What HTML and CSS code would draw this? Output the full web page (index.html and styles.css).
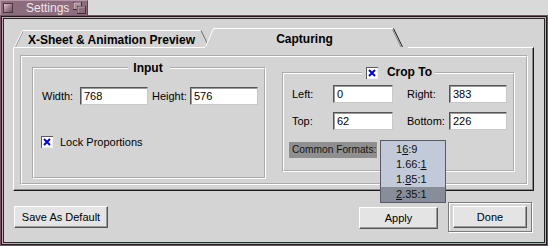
FILE: index.html
```html
<!DOCTYPE html>
<html>
<head>
<meta charset="utf-8">
<link rel="stylesheet" href="styles.css">
</head>
<body>
<div class="titlebar">
  <span class="closebox"></span>
  <span class="title">Settings</span>
  <svg class="zoombox" width="13" height="12" viewBox="0 0 13 12">
    <rect x="0.5" y="0.5" width="8" height="7" fill="#a98c9b" stroke="#3c2c35"/>
    <rect x="4.5" y="4.5" width="8" height="7" fill="#8d6d7d" stroke="#3c2c35"/>
    <path d="M1 1h7M1 1v6" stroke="#d9c3cf"/>
    <path d="M5 5h7M5 5v6" stroke="#c2a8b6"/>
  </svg>
</div>
<div class="window">
  <div class="tabs">
    <div class="tab tab-back">
      <svg class="tab-shape" width="195" height="17" viewBox="0 0 195 17">
        <polygon points="0,17 8,0.5 187,0.5 195,17" fill="#d4d4d4"/>
        <path d="M0.5 17 L8.5 0.5 L187 0.5" fill="none" stroke="#ffffff"/>
        <path d="M1.5 17 L9 1.5" fill="none" stroke="#a0a0a0"/>
        <path d="M187 0.5 L195 17" fill="none" stroke="#707070"/>
      </svg>
      <span class="tab-label">X-Sheet &amp; Animation Preview</span>
    </div>
    <div class="tab tab-front">
      <svg class="tab-shape" width="199" height="19" viewBox="0 0 199 19">
        <polygon points="0,19 8,0.5 189,0.5 198,19" fill="#d4d4d4"/>
        <path d="M0.5 19 L8.5 0.5 L188 0.5" fill="none" stroke="#ffffff"/>
        <path d="M188.5 0.5 L197.5 19" fill="none" stroke="#1a1a1a"/>
        <path d="M187.5 1.5 L196 19" fill="none" stroke="#8a8a8a"/>
      </svg>
      <span class="tab-label">Capturing</span>
    </div>
  </div>
  <div class="panel">
    <div class="frame">
      <fieldset class="group group-input">
        <legend class="legend">Input</legend>
        <div class="size-grid">
          <span class="lbl">Width:</span><span class="field">768</span>
          <span class="lbl lbl-gap">Height:</span><span class="field">576</span>
        </div>
        <div class="check-row">
          <svg class="check" width="12" height="12" viewBox="0 0 12 12">
            <rect x="0" y="0" width="12" height="12" fill="#5a5a5a"/>
            <rect x="1" y="1" width="11" height="11" fill="#f2f2f2"/>
            <rect x="1" y="1" width="10" height="10" fill="#ffffff"/>
            <path d="M3 3 L9 9 M9 3 L3 9" stroke="#0000e6" stroke-width="2"/>
          </svg>
          <span class="lbl">Lock Proportions</span>
        </div>
      </fieldset>
      <fieldset class="group group-crop">
        <legend class="legend legend-check">
          <svg class="check" width="12" height="12" viewBox="0 0 12 12">
            <rect x="0" y="0" width="12" height="12" fill="#5a5a5a"/>
            <rect x="1" y="1" width="11" height="11" fill="#f2f2f2"/>
            <rect x="1" y="1" width="10" height="10" fill="#ffffff"/>
            <path d="M3 3 L9 9 M9 3 L3 9" stroke="#0000e6" stroke-width="2"/>
          </svg>
          <span>Crop To</span>
        </legend>
        <div class="crop-grid">
          <span class="lbl">Left:</span><span class="field">0</span>
          <span class="lbl lbl-gap2">Right:</span><span class="field">383</span>
          <span class="lbl">Top:</span><span class="field">62</span>
          <span class="lbl lbl-gap2">Bottom:</span><span class="field">226</span>
        </div>
        <div class="formats">
          <span class="formats-label">Common Formats:</span>
          <div class="menu">
            <div class="menu-item">1<u>6</u>:9</div>
            <div class="menu-item">1.66:<u>1</u></div>
            <div class="menu-item">1.<u>8</u>5:1</div>
            <div class="menu-item menu-item-hot"><u>2</u>.35:1</div>
          </div>
        </div>
      </fieldset>
    </div>
  </div>
  <div class="buttons">
    <span class="btn btn-save">Save As Default</span>
    <span class="btn btn-apply">Apply</span>
    <span class="default-ring"><span class="btn btn-done">Done</span></span>
  </div>
</div>
</body>
</html>
```

FILE: styles.css
```css
html, body {
  margin: 0;
  padding: 0;
}
body {
  width: 548px;
  height: 246px;
  overflow: hidden;
  background: #d9d9d9;
  font-family: "Liberation Sans", Arial, sans-serif;
  font-size: 11px;
  color: #000;
}
.titlebar {
  width: 88px;
  height: 15px;
  box-sizing: border-box;
  background: #8d6d7d;
  border-top: 1px solid #b797a7;
  border-left: 1px solid #b797a7;
  border-right: 1px solid #5b4350;
  display: flex;
  align-items: center;
  padding-left: 2px;
}
.closebox {
  width: 10px;
  height: 10px;
  box-sizing: border-box;
  border: 1px solid #4a3640;
  background: linear-gradient(135deg, #e0c4d2 0%, #a3808f 50%, #6e5260 100%);
}
.title {
  margin-left: 13px;
  color: #f0e6eb;
  font-size: 12px;
  line-height: 14px;
}
.zoombox {
  margin-left: auto;
  margin-right: 1px;
}
.window {
  height: 231px;
  box-sizing: border-box;
  padding: 4px;
  background: #d4d4d4;
  box-shadow: inset 0 0 0 1px #6e5563, inset 0 0 0 2px #1d1b1c, inset 0 0 0 3px #c7a3b5, inset 0 0 0 4px #2a2a2a;
}
.tabs {
  display: flex;
  align-items: flex-end;
  margin: 9px 0 0 10px;
  height: 19px;
}
.tab {
  position: relative;
  display: flex;
  align-items: center;
  justify-content: center;
  font-size: 12px;
  font-weight: bold;
}
.tab-shape {
  position: absolute;
  left: 0;
  top: 0;
}
.tab-label {
  position: relative;
  line-height: 14px;
}
.tab-back {
  width: 195px;
  height: 17px;
}
.tab-back .tab-label {
  top: 1px;
}
.tab-front {
  width: 199px;
  height: 19px;
  margin-left: -4px;
}
.tab-front .tab-label {
  top: 1px;
}
.panel {
  margin-left: 9px;
  width: 521px;
  height: 144px;
  box-sizing: border-box;
  border-left: 1px solid #ffffff;
  border-top: 1px solid #d4d4d4;
  border-right: 1px solid #1a1a1a;
  border-bottom: 1px solid #1a1a1a;
  box-shadow: inset -1px -1px 0 #8a8a8a, inset 1px 0 0 #d4d4d4;
  padding: 7px 5px 5px 6px;
  position: relative;
}
.panel::before {
  content: "";
  position: absolute;
  left: 394px;
  right: 0;
  top: -1px;
  border-top: 1px solid #ffffff;
}
.panel::after {
  content: "";
  position: absolute;
  left: 0;
  width: 191px;
  top: -1px;
  border-top: 1px solid #ffffff;
}
.frame {
  height: 130px;
  box-sizing: border-box;
  border: 2px groove #ffffff;
  display: flex;
  align-items: flex-start;
  padding: 4px 0 0 10px;
}
.group {
  margin: 0;
  border: 2px groove #ffffff;
  box-sizing: border-box;
  min-width: 0;
}
.legend {
  margin: 0 auto;
  padding: 0 7px 0 5px;
  font-size: 12px;
  font-weight: bold;
  line-height: 14px;
}
.legend-check {
  display: flex;
  align-items: center;
  gap: 9px;
  padding: 0 3px 0 4px;
  line-height: 13px;
}
.group-input {
  width: 234px;
  height: 118px;
  padding: 12px 0 0 0;
}
.group-crop {
  width: 233px;
  height: 106px;
  margin-top: 5px;
  margin-left: 16px;
  padding: 6px 0 0 0;
}
.size-grid {
  display: grid;
  grid-template-columns: 38px 68px 42px 68px;
  align-items: center;
  margin-left: 8px;
}
.crop-grid {
  display: grid;
  grid-template-columns: 41px 60px 56px 58px;
  grid-auto-rows: 18px;
  row-gap: 9px;
  align-items: center;
  margin-left: 8px;
}
.lbl {
  white-space: nowrap;
}
.lbl-gap {
  padding-left: 4px;
}
.lbl-gap2 {
  padding-left: 14px;
}
.field {
  height: 18px;
  box-sizing: border-box;
  background: #ffffff;
  border-top: 1px solid #555;
  border-left: 1px solid #555;
  border-right: 1px solid #c8c8c8;
  border-bottom: 1px solid #c8c8c8;
  box-shadow: inset 1px 1px 0 #9a9a9a;
  padding-left: 3px;
  line-height: 16px;
}
.check-row {
  display: flex;
  align-items: center;
  gap: 7px;
  margin: 31px 0 0 7px;
}
.check {
  display: block;
  flex: none;
}
.formats {
  position: relative;
  margin: 12px 0 0 5px;
  height: 16px;
}
.formats-label {
  display: block;
  width: 88px;
  height: 16px;
  box-sizing: border-box;
  padding-left: 3px;
  line-height: 16px;
  font-size: 10.2px;
  white-space: nowrap;
  background: #8f8f8f;
  color: #141414;
}
.menu {
  position: absolute;
  left: 91px;
  top: -2px;
  width: 66px;
  box-sizing: border-box;
  border: 1px solid #555a64;
  background: #c2c9d8;
  padding-top: 1px;
}
.menu-item {
  height: 15px;
  line-height: 15px;
  padding-left: 15px;
  color: #101010;
}
.menu-item-hot {
  background: #878d99;
}
.buttons {
  display: flex;
  align-items: center;
  height: 30px;
  margin: 11px 12px 0 10px;
}
.btn {
  display: flex;
  align-items: center;
  justify-content: center;
  height: 22px;
  box-sizing: border-box;
  background: #e4e4e4;
  border-top: 1px solid #ffffff;
  border-left: 1px solid #ffffff;
  border-right: 1px solid #555555;
  border-bottom: 1px solid #555555;
  box-shadow: inset -1px -1px 0 #9a9a9a;
  font-size: 11px;
}
.btn-save {
  width: 94px;
}
.btn-apply {
  width: 79px;
  margin-left: auto;
  position: relative;
  top: 1px;
}
.default-ring {
  margin-left: 10px;
  width: 84px;
  height: 30px;
  box-sizing: border-box;
  border: 1px solid #7a7a7a;
  box-shadow: inset 1px 1px 0 #ffffff, 1px 1px 0 #ffffff;
  display: flex;
  align-items: center;
  justify-content: center;
}
.btn-done {
  width: 74px;
}
```
